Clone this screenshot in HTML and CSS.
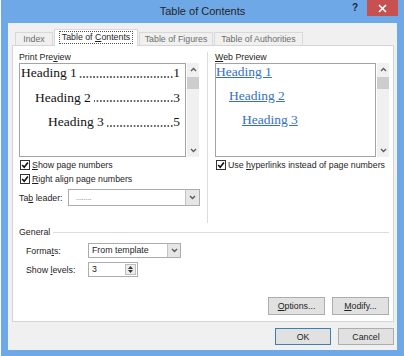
FILE: index.html
```html
<!DOCTYPE html>
<html lang="en">
<head>
    <meta charset="UTF-8">
    <title>Table of Contents</title>
    <link rel="stylesheet" href="styles.css">
</head>
<body>
    <div class="window">
        <div class="titlebar">
            <span class="title">Table of Contents</span>
            <div class="title-controls">
                <span class="help">?</span>
                <span class="close">
                    <svg width="9" height="9" viewBox="0 0 9 9"><path d="M1 1 L8 8 M8 1 L1 8" stroke="#fff" stroke-width="1.6"/></svg>
                </span>
            </div>
        </div>

        <div class="dialog">
            <div class="tabs">
                <div class="tab tab-index">Index</div>
                <div class="tab tab-toc active"><span class="focus">Table of <u>C</u>ontents</span></div>
                <div class="tab tab-figures">Table of Figures</div>
                <div class="tab tab-authorities">Table of Authorities</div>
            </div>

            <div class="panel">
                <div class="previews">
                    <div class="print-col">
                        <div class="group-label">Print Pre<u>v</u>iew</div>
                        <div class="preview-box">
                            <div class="preview print">
                                <div class="toc-line"><span>Heading 1</span><span class="leader"></span><span>1</span></div>
                                <div class="toc-line lvl2"><span>Heading 2</span><span class="leader spaced"></span><span>3</span></div>
                                <div class="toc-line lvl3"><span>Heading 3</span><span class="leader spaced"></span><span>5</span></div>
                            </div>
                            <div class="scrollbar">
                                <div class="sb-arrow"><svg width="7" height="5" viewBox="0 0 7 5"><path d="M1 4 L3.5 1.5 L6 4" fill="none" stroke="#5a5a5a" stroke-width="1.3"/></svg></div>
                                <div class="sb-thumb"></div>
                                <div class="sb-space"></div>
                                <div class="sb-arrow"><svg width="7" height="5" viewBox="0 0 7 5"><path d="M1 1 L3.5 3.5 L6 1" fill="none" stroke="#5a5a5a" stroke-width="1.3"/></svg></div>
                            </div>
                        </div>
                        <div class="check">
                            <svg width="10" height="10" viewBox="0 0 10 10"><rect x="0.5" y="0.5" width="9" height="9" fill="#fff" stroke="#333"/><path d="M2.2 5 L4.2 7.3 L7.9 2.4" fill="none" stroke="#111" stroke-width="1.6"/></svg>
                            <span><u>S</u>how page numbers</span>
                        </div>
                        <div class="check">
                            <svg width="10" height="10" viewBox="0 0 10 10"><rect x="0.5" y="0.5" width="9" height="9" fill="#fff" stroke="#333"/><path d="M2.2 5 L4.2 7.3 L7.9 2.4" fill="none" stroke="#111" stroke-width="1.6"/></svg>
                            <span><u>R</u>ight align page numbers</span>
                        </div>
                        <div class="field-row leader-row">
                            <span class="leader-label">Ta<u>b</u> leader:</span>
                            <div class="combo leader-combo">
                                <span class="combo-text dots">........</span>
                                <span class="combo-drop"><svg width="7" height="5" viewBox="0 0 7 5"><path d="M1 1 L3.5 3.5 L6 1" fill="none" stroke="#555" stroke-width="1.3"/></svg></span>
                            </div>
                        </div>
                    </div>

                    <div class="web-col">
                        <div class="group-label"><u>W</u>eb Preview</div>
                        <div class="preview-box">
                            <div class="preview web">
                                <div class="toc-line"><span class="link">Heading 1</span></div>
                                <div class="toc-line lvl2"><span class="link">Heading 2</span></div>
                                <div class="toc-line lvl3"><span class="link">Heading 3</span></div>
                            </div>
                            <div class="scrollbar">
                                <div class="sb-arrow"><svg width="7" height="5" viewBox="0 0 7 5"><path d="M1 4 L3.5 1.5 L6 4" fill="none" stroke="#5a5a5a" stroke-width="1.3"/></svg></div>
                                <div class="sb-thumb"></div>
                                <div class="sb-space"></div>
                                <div class="sb-arrow"><svg width="7" height="5" viewBox="0 0 7 5"><path d="M1 1 L3.5 3.5 L6 1" fill="none" stroke="#5a5a5a" stroke-width="1.3"/></svg></div>
                            </div>
                        </div>
                        <div class="check">
                            <svg width="10" height="10" viewBox="0 0 10 10"><rect x="0.5" y="0.5" width="9" height="9" fill="#fff" stroke="#333"/><path d="M2.2 5 L4.2 7.3 L7.9 2.4" fill="none" stroke="#111" stroke-width="1.6"/></svg>
                            <span>Use <u>h</u>yperlinks instead of page numbers</span>
                        </div>
                    </div>
                </div>

                <div class="general-head">
                    <span>General</span>
                    <span class="rule"></span>
                </div>
                <div class="general-row">
                    <span class="general-label">Forma<u>t</u>s:</span>
                    <div class="combo formats-combo">
                        <span class="combo-text">From template</span>
                        <span class="combo-drop"><svg width="7" height="5" viewBox="0 0 7 5"><path d="M1 1 L3.5 3.5 L6 1" fill="none" stroke="#555" stroke-width="1.3"/></svg></span>
                    </div>
                </div>
                <div class="general-row">
                    <span class="general-label">Show <u>l</u>evels:</span>
                    <div class="combo spin">
                        <span class="combo-text">3</span>
                        <span class="spin-buttons">
                            <svg width="5" height="3" viewBox="0 0 5 3"><path d="M0 3 L2.5 0 L5 3 Z" fill="#333"/></svg>
                            <svg width="5" height="3" viewBox="0 0 5 3"><path d="M0 0 L2.5 3 L5 0 Z" fill="#333"/></svg>
                        </span>
                    </div>
                </div>

                <div class="panel-buttons">
                    <button class="btn"><u>O</u>ptions...</button>
                    <button class="btn"><u>M</u>odify...</button>
                </div>
            </div>

            <div class="dialog-buttons">
                <button class="btn ok">OK</button>
                <button class="btn">Cancel</button>
            </div>
        </div>
    </div>
</body>
</html>
```

FILE: styles.css
```css
body {
    margin: 0;
    background: #fff;
    font-family: "Liberation Sans", Arial, sans-serif;
    font-size: 8.8px;
    color: #1e1e1e;
}
.window {
    margin-left: 1px;
    width: 403px;
    height: 356px;
    box-sizing: border-box;
    background: #6ea8e6;
    padding: 0 7px 6px 7px;
    display: flex;
    flex-direction: column;
}
.titlebar {
    flex: none;
    height: 23px;
    display: grid;
    grid-template-columns: 1fr auto 1fr;
}
.title {
    grid-column: 2;
    font-size: 11px;
    line-height: 23px;
    color: #262626;
}
.title-controls {
    grid-column: 3;
    justify-self: end;
    display: flex;
    align-items: flex-start;
    margin-right: -1px;
}
.help {
    font-size: 10px;
    font-weight: bold;
    line-height: 16px;
    color: #1b2a40;
    margin-right: 9px;
}
.close {
    width: 31px;
    height: 16px;
    background: #c75050;
    display: flex;
    align-items: center;
    justify-content: center;
}
.dialog {
    flex: 1;
    background: #f0f0f0;
    padding: 6px 3px 5px 4px;
    display: flex;
    flex-direction: column;
}
.tabs {
    flex: none;
    height: 16px;
    display: flex;
    align-items: flex-end;
    padding-left: 3px;
}
.tab {
    box-sizing: border-box;
    height: 13px;
    border: 1px solid #d9d9d9;
    border-bottom: none;
    background: #f0f0f0;
    color: #6d6d6d;
    line-height: 12px;
    text-align: center;
}
.tab-index { width: 38px; }
.tab-toc { width: 84px; }
.tab-figures { width: 74px; margin-right: 1px; }
.tab-authorities { width: 89px; }
.tab.active {
    height: 17px;
    margin: 0 1px -1px 1px;
    background: #fff;
    color: #1e1e1e;
    position: relative;
    z-index: 1;
}
.focus {
    display: inline-block;
    margin-top: 1px;
    padding: 0 2px;
    line-height: 11px;
    border: 1px dotted #555;
}
.panel {
    flex: 1;
    background: #fff;
    border: 1px solid #d5d5d5;
    padding: 6px 4px 6px 6px;
    display: flex;
    flex-direction: column;
}
.previews {
    display: flex;
}
.print-col {
    width: 188px;
    padding-bottom: 17px;
}
.print-col .preview-box {
    width: 180px;
}
.web-col {
    flex: 1;
    border-left: 1px solid #dcdcdc;
    padding-left: 7px;
}
.group-label {
    line-height: 11px;
}
.preview-box {
    display: flex;
    gap: 1px;
    height: 94px;
}
.preview {
    flex: 1;
    border: 1px solid #a3a3a3;
    font-family: "Liberation Serif", "Times New Roman", serif;
    font-size: 13.5px;
    overflow: hidden;
}
.print {
    color: #111;
    padding: 0 5px 0 1px;
}
.print .toc-line {
    display: flex;
    line-height: 18px;
    white-space: nowrap;
}
.print .toc-line + .toc-line {
    margin-top: 6.5px;
}
/* dotted tab leader between heading and page number */
.leader {
    flex: 1;
    align-self: flex-end;
    height: 2px;
    margin: 0 0 4.5px 1px;
    background-image: radial-gradient(circle, #333 0.55px, transparent 0.95px);
    background-size: 3.375px 2px;
    background-repeat: repeat-x;
    background-position: right center;
}
.leader.spaced {
    margin-left: 3px;
}
.web .toc-line {
    line-height: 16px;
}
.web .toc-line + .toc-line {
    margin-top: 8px;
}
.link {
    color: #3670c2;
    text-decoration: underline;
}
.lvl2 { padding-left: 14px; }
.lvl3 { padding-left: 27px; }
.web .lvl2 { padding-left: 13px; }
.web .lvl3 { padding-left: 26px; }
.scrollbar {
    width: 12px;
    background: #f0f0f0;
    display: flex;
    flex-direction: column;
}
.sb-arrow {
    height: 13px;
    display: flex;
    align-items: center;
    justify-content: center;
}
.sb-thumb {
    height: 12px;
    margin-top: 1px;
    background: #cdcdcd;
}
.sb-space {
    flex: 1;
}
.check {
    display: flex;
    align-items: center;
    gap: 2px;
    height: 12px;
    margin-top: 2px;
    padding-left: 1px;
}
.field-row {
    display: flex;
    align-items: center;
}
.leader-row {
    margin-top: 4px;
}
.leader-label {
    width: 49px;
}
.combo {
    box-sizing: border-box;
    display: flex;
    border: 1px solid #acacac;
    background: #fff;
}
.combo-text {
    flex: 1;
    padding-left: 3px;
    white-space: nowrap;
}
.combo-drop {
    width: 12px;
    border-left: 1px solid #c4c4c4;
    background: #e6e6e6;
    display: flex;
    align-items: center;
    justify-content: center;
}
.leader-combo {
    width: 132px;
    height: 17px;
    line-height: 15px;
}
.leader-combo .combo-drop {
    width: 13px;
}
.dots {
    padding-left: 7px;
    color: #555;
    font-size: 7px;
}
.general-head {
    display: flex;
    align-items: center;
    margin-top: 4px;
    line-height: 11px;
}
.rule {
    flex: 1;
    height: 1px;
    background: #dcdcdc;
    margin-left: 3px;
}
.general-row {
    display: flex;
    align-items: center;
    padding-left: 7px;
    margin-top: 5px;
}
.general-row + .general-row {
    margin-top: 4px;
}
.general-label {
    width: 62px;
}
.formats-combo {
    width: 93px;
    height: 15px;
    line-height: 13px;
}
.spin {
    width: 50px;
    height: 15px;
    line-height: 13px;
}
.spin-buttons {
    width: 9px;
    margin: 1px 1px 1px 0;
    border: 1px solid #bdbdbd;
    background: #ececec;
    display: flex;
    flex-direction: column;
    align-items: center;
    justify-content: space-around;
}
.panel-buttons {
    margin-top: auto;
    display: flex;
    justify-content: flex-end;
    gap: 7px;
}
.panel-buttons .btn {
    width: 57px;
    height: 18px;
}
.btn {
    box-sizing: border-box;
    width: 56px;
    height: 17px;
    padding: 0;
    border: 1px solid #adadad;
    background: #e1e1e1;
    font: inherit;
    color: #1e1e1e;
}
.ok {
    border-color: #3c7fb1;
}
.dialog-buttons {
    flex: none;
    margin-top: 6px;
    display: flex;
    justify-content: flex-end;
    gap: 7px;
}
```
